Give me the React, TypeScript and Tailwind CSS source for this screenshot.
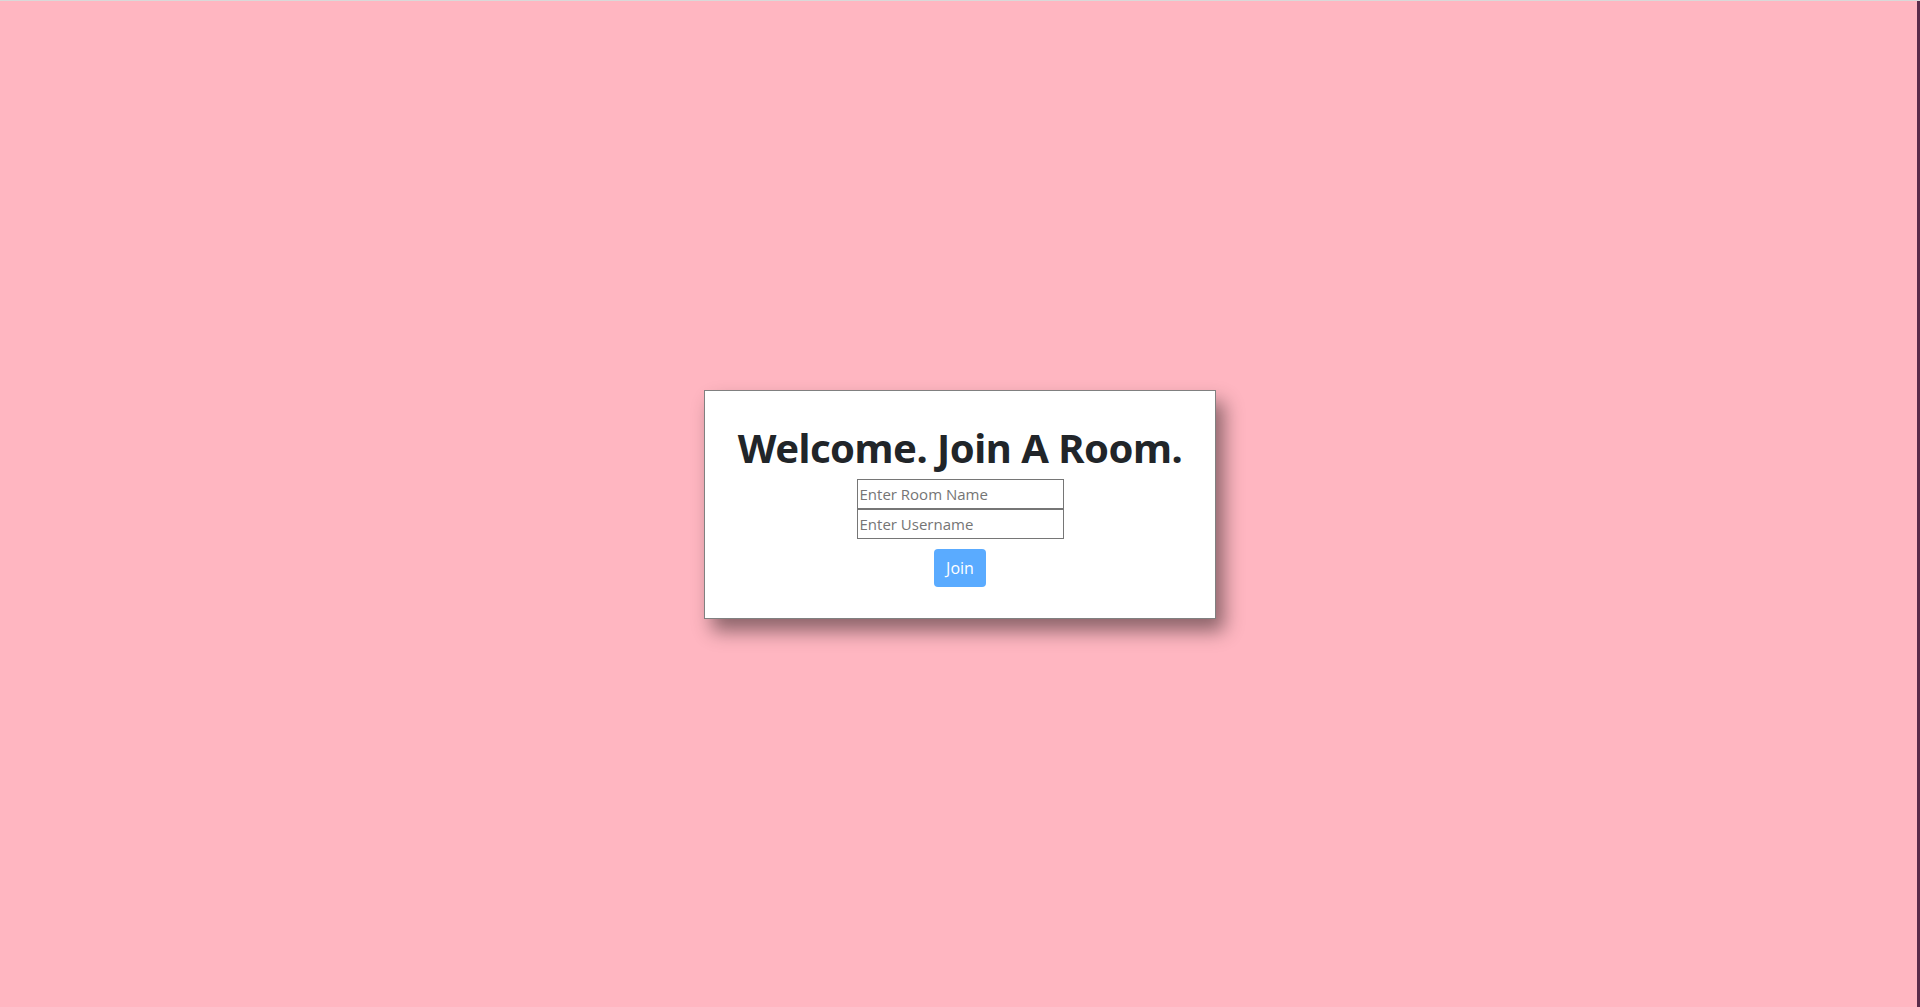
export default function App() {
  return (
    <div className="relative flex h-[1007px] w-[1920px] items-center justify-center overflow-hidden border-t border-[#d9d9d9] bg-[#ffb6c1]" style={{ fontFamily: '"Open Sans", "Noto Sans", sans-serif' }}>
      <div className="absolute right-0 top-0 h-full w-[3px] bg-[#5a2b4a]" />
      <div className="flex h-[229px] w-[512px] flex-col items-center border border-[#808080] bg-white pt-[33px] shadow-[8px_12px_18px_rgba(0,0,0,0.45)]">
        <h1 className="m-0 text-[40px] font-bold leading-[48px] tracking-[-0.5px] text-[#212529]" style={{ fontFamily: '"Noto Sans", "Open Sans", sans-serif' }}>
          Welcome. Join A Room.
        </h1>
        <input
          className="mt-[7px] block h-[30px] w-[207px] border border-[#767676] px-[2px] text-[15px] text-[#212529] placeholder:text-[#757575] outline-none"
          placeholder="Enter Room Name"
        />
        <input
          className="block h-[30px] w-[207px] border border-[#767676] px-[2px] text-[15px] text-[#212529] placeholder:text-[#757575] outline-none"
          placeholder="Enter Username"
        />
        <button className="mt-[10px] h-[38px] rounded-[4px] bg-[#5aabff] px-[12px] text-[16px] text-white">
          Join
        </button>
      </div>
    </div>
  );
}
